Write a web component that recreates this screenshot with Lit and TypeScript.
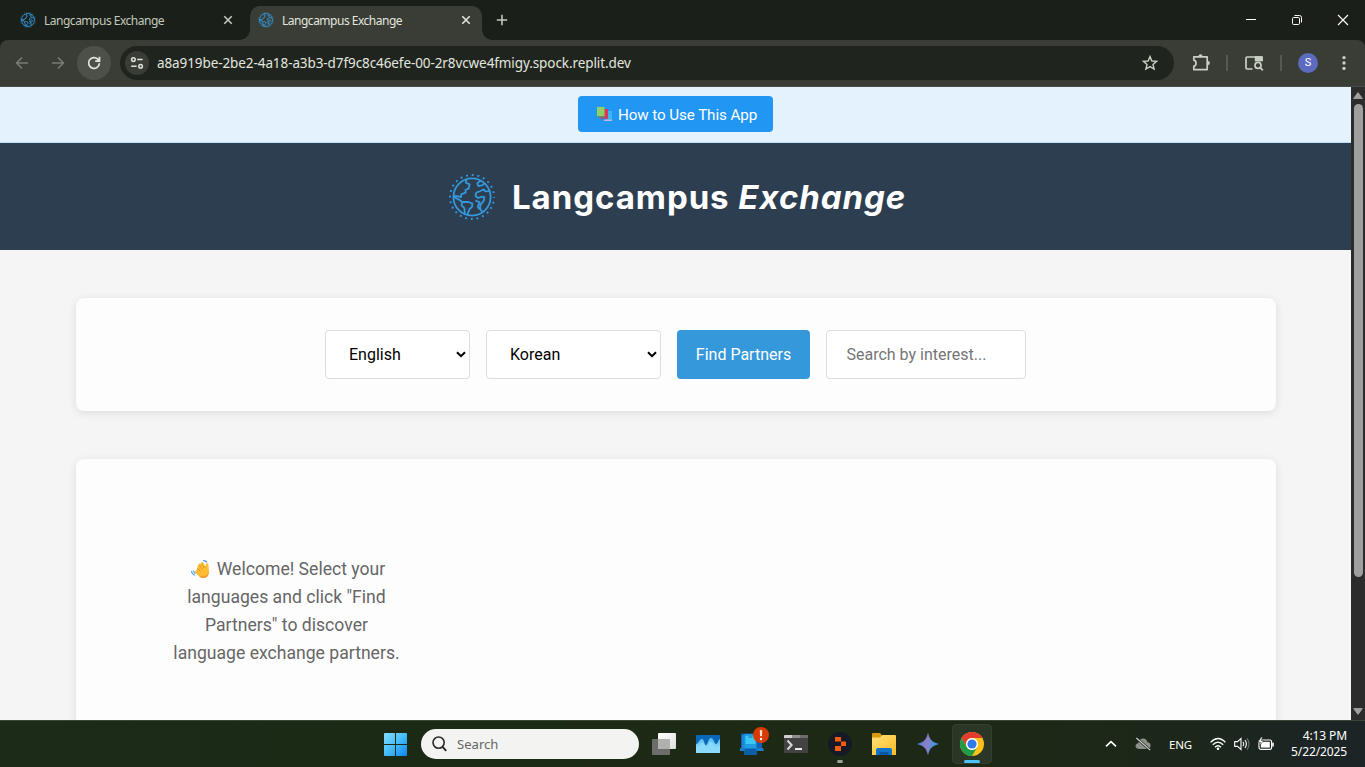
import { LitElement, html, css } from "lit";
import { customElement } from "lit/decorators.js";

const globe = (size: number, stroke: number) => html`
  <svg width=${size} height=${size} viewBox="0 0 46 46" fill="none" stroke="#3498db" stroke-width=${stroke} stroke-linejoin="round">
    <circle cx="23" cy="23" r="22" stroke-width="1.9" stroke-dasharray="1.9 3.86" stroke-dashoffset="0.95" />
    <circle cx="23" cy="23" r="18.6" />
    <path d="M17.6 5.4L16.8 8.6L20.6 10.4L19.8 14.4L16.4 16L16.8 18.6L12.4 20.2L12 23L5 21.6M5 23L11.6 26.6L13 28H19.6L23.4 29.6L23 32.8L20.6 35L18.2 40.8M13 28L12.6 31.4L15.4 34.2L15.8 40" />
    <path d="M31.4 6.8L28.2 9.4L29.4 12.2L33 11.4L35.2 9.6M40.6 17.2L36.4 17.4L35 15.4L31.4 17L27.4 18.6L26.4 21.8L29 24L32.8 22.6L35.4 23.2L34.6 27L31.6 30.6L31 34.6L33.6 38.2M26.4 26.6L30.6 28.2L28.8 32.6L30.4 35.4" />
  </svg>`;

const closeIcon = html`<svg width="10" height="10" viewBox="0 0 10 10" stroke="currentColor" stroke-width="1.6"><path d="M1.3 1.3L8.7 8.7M8.7 1.3L1.3 8.7" /></svg>`;
const caret = html`<svg width="10" height="7" viewBox="0 0 10 7" fill="none" stroke="#000" stroke-width="2"><path d="M1 1.2L5 5.1L9 1.2" /></svg>`;

@customElement("browser-chrome")
export class BrowserChrome extends LitElement {
  static styles = css`
    :host { display: block; font-family: "Noto Sans", sans-serif; color: #e3e6df; }
    svg { display: block; flex: none; }
    .strip { height: 40px; display: flex; background: #1b1f1a; }
    .tab { box-sizing: border-box; display: flex; align-items: center; font-size: 12px; letter-spacing: -0.49px; white-space: nowrap; }
    .tab .name { flex: 1; margin-left: 8px; }
    .idle { width: 250px; padding: 0 17px 0 20px; color: #c3c9bd; }
    .active { position: relative; width: 232px; margin-top: 6px; padding: 0 11px 6px 8px; border-radius: 10px 10px 0 0; background: #393d36; }
    .active::before, .active::after { content: ""; position: absolute; bottom: 0; width: 10px; height: 10px; }
    .active::before { left: -10px; background: radial-gradient(circle at 0 0, transparent 9.5px, #393d36 10px); }
    .active::after { right: -10px; background: radial-gradient(circle at 100% 0, transparent 9.5px, #393d36 10px); }
    .plus { margin: 14px 0 0 14px; }
    .window { margin-left: auto; display: flex; align-items: center; gap: 34px; padding-right: 16px; color: #fff; }
    .bar { box-sizing: border-box; height: 47px; display: flex; align-items: center; padding: 0 9px 1px 10px; background: #393d36; border-bottom: 1px solid #4a4d47; border-radius: 8px 8px 0 0; }
    .back { color: #777b73; }
    .fwd { margin-left: 12px; color: #777b73; }
    .reload { width: 34px; height: 34px; margin-left: 7px; border-radius: 50%; background: #4c5049; display: grid; place-items: center; }
    .omni { box-sizing: border-box; width: 1054px; height: 34px; margin-left: 9px; padding: 0 14px 0 5px; border-radius: 17px; background: #20241f; display: flex; align-items: center; }
    .tune { width: 24px; height: 24px; border-radius: 50%; background: #393d36; display: grid; place-items: center; }
    .url { flex: 1; margin-left: 8px; font-size: 13.5px; letter-spacing: -0.09px; white-space: nowrap; }
    .ext { margin-left: 15px; }
    .sep { width: 2px; height: 16px; background: #565b52; }
    .s1 { margin: 0 14px 0 13px; }
    .s2 { margin: 0 16px 0 14px; }
    .avatar { width: 20px; height: 20px; border-radius: 50%; background: #5c6bc0; color: #fff; font: 11px/20px Roboto, sans-serif; text-align: center; }
    .menu { margin-left: 14px; }
    .wrapbar { background: #1b1f1a; }
  `;
  render() {
    return html`
      <div class="strip">
        <div class="tab idle">${globe(16, 2.6)}<span class="name">Langcampus Exchange</span>${closeIcon}</div>
        <div class="tab active">${globe(16, 2.6)}<span class="name">Langcampus Exchange</span>${closeIcon}</div>
        <svg class="plus" width="12" height="12" viewBox="0 0 12 12" stroke="#c3c9bd" stroke-width="1.6"><path d="M6 .8V11.2M.8 6H11.2" /></svg>
        <div class="window">
          <svg width="12" height="12" viewBox="0 0 12 12"><path d="M1 5.5H11" stroke="#fff" /></svg>
          <svg width="12" height="12" viewBox="0 0 12 12" fill="none" stroke="#fff"><rect x="1.5" y="3.5" width="7" height="7" rx="1.2" /><path d="M3.5 1.5H8.5Q10.5 1.5 10.5 3.5V8.5" /></svg>
          <svg width="12" height="12" viewBox="0 0 12 12" stroke="#fff" stroke-width="1.1"><path d="M1 1L11 11M11 1L1 11" /></svg>
        </div>
      </div>
      <div class="wrapbar"><div class="bar">
        <svg class="back" width="24" height="24" viewBox="0 0 24 24" fill="none" stroke="currentColor" stroke-width="1.6"><path d="M18 12H7M12 6.5L6.6 12L12 17.5" /></svg>
        <svg class="fwd" width="24" height="24" viewBox="0 0 24 24" fill="none" stroke="currentColor" stroke-width="1.6"><path d="M6 12H17M12 6.5L17.4 12L12 17.5" /></svg>
        <div class="reload"><svg width="16" height="16" viewBox="0 0 16 16" fill="none" stroke="#e3e6df" stroke-width="1.7"><path d="M13.4 8.2A5.4 5.4 0 1 1 11.8 4.1L13.2 5.6M13.5 1.8V6.1H9.2" /></svg></div>
        <div class="omni">
          <div class="tune"><svg width="14" height="14" viewBox="0 0 14 14" fill="none" stroke="#dfe3da" stroke-width="1.5"><circle cx="3.4" cy="3.6" r="1.8" /><path d="M7.2 3.6H12.6M1.2 10.2H6.6" /><circle cx="10.6" cy="10.2" r="1.8" /></svg></div>
          <span class="url">a8a919be-2be2-4a18-a3b3-d7f9c8c46efe-00-2r8vcwe4fmigy.spock.replit.dev</span>
          <svg width="20" height="20" viewBox="0 0 20 20" fill="none" stroke="#c9cfc3" stroke-width="1.4"><path d="M10 3.6L11.9 8L16.6 8.4L13 11.5L14.1 16.1L10 13.6L5.9 16.1L7 11.5L3.4 8.4L8.1 8Z" /></svg>
        </div>
        <svg class="ext" width="24" height="24" viewBox="0 0 24 24"><path d="M4.8 5.8H18.2V18.6H4.8V15.3C7.8 14.5 7.8 9.9 4.8 9.1Z" fill="none" stroke="#c9cfc3" stroke-width="1.7" stroke-linejoin="round" /><path d="M9.4 5.4A2.1 2.1 0 0 1 13.6 5.4ZM18.8 10A2.1 2.1 0 0 1 18.8 14.2Z" fill="#c9cfc3" /></svg>
        <span class="sep s1"></span>
        <svg width="24" height="24" viewBox="0 0 24 24" fill="none" stroke="#c9cfc3" stroke-width="1.7"><path d="M10.5 18H5.2Q4 18 4 16.8V7.2Q4 6 5.2 6H19Q20 6 20 7V10" /><path d="M12.8 5.2H20.8V10.4H12.8Z" fill="#c9cfc3" stroke="none" /><circle cx="16" cy="14.4" r="3" /><path d="M18.2 16.6L20.8 19.4" /></svg>
        <span class="sep s2"></span>
        <span class="avatar">S</span>
        <svg class="menu" width="24" height="24" viewBox="0 0 24 24" fill="#c9cfc3"><circle cx="12" cy="6.6" r="1.7" /><circle cx="12" cy="12" r="1.7" /><circle cx="12" cy="17.4" r="1.7" /></svg>
      </div></div>`;
  }
}

@customElement("exchange-page")
export class ExchangePage extends LitElement {
  static styles = css`
    :host { display: flex; min-height: 0; overflow: hidden; font-family: Roboto, sans-serif; background: #f5f5f5; }
    svg { display: block; flex: none; }
    .page { flex: 1; min-width: 0; }
    .guide { box-sizing: border-box; height: 56px; padding-top: 9px; display: flex; justify-content: center; align-items: flex-start; background: #e3f2fd; border-bottom: 1px solid #bbdefb; }
    .how { box-sizing: border-box; width: 195px; height: 36px; padding: 1px 0 0 19px; display: flex; align-items: center; gap: 6px; border-radius: 4px; background: #2196f3; color: #fff; font-size: 15.2px; letter-spacing: -0.09px; white-space: nowrap; }
    .head { height: 107px; display: flex; align-items: center; padding-left: 449px; background: #2c3e50; }
    .title { margin: 0 0 0 17px; color: #fff; font: 700 33px/44px Inter, sans-serif; white-space: nowrap; letter-spacing: 0.95px; }
    .card { box-sizing: border-box; width: 1200px; margin: 48px 0 0 76px; border-radius: 8px; background: #fdfdfd; box-shadow: 0 2px 10px rgba(0, 0, 0, 0.1); }
    .filters { height: 113px; display: flex; align-items: center; justify-content: center; gap: 16px; padding-right: 1px; font-size: 16px; }
    .field { box-sizing: border-box; height: 49px; display: flex; align-items: center; justify-content: space-between; border: 1px solid #ddd; border-radius: 4px; background: #fff; color: #000; padding: 0 3px 0 23px; }
    .native { width: 145px; }
    .target { width: 175px; }
    .find { width: 133px; height: 49px; border-radius: 4px; background: #3498db; color: #fff; text-align: center; line-height: 49px; }
    .interest { width: 200px; padding-left: 19.5px; color: #757575; }
    .results { height: 400px; padding: 96px 0 0 96px; }
    .welcome { width: 229px; margin: 0; color: #666; font-size: 17.6px; line-height: 28px; text-align: center; white-space: nowrap; }
    .first { display: flex; justify-content: center; align-items: center; gap: 7px; padding-left: 3px; }
    .line { display: block; }
    .scroll { width: 14px; display: flex; flex-direction: column; align-items: center; background: #2c2c2c; padding-top: 5px; box-sizing: border-box; }
    .thumb { width: 9px; height: 473px; margin: 5px 0 131px; border-radius: 5px; background: #9f9f9f; }
  `;
  render() {
    return html`
      <div class="page">
        <div class="guide"><div class="how">
          <svg width="15" height="15" viewBox="0 0 15 15"><path d="M8 4H15V14H8Z" fill="#3cb8ee" /><path d="M7 12.6H15V14H7Z" fill="#c5b4e8" /><path d="M4 2H11V12H4Z" fill="#d9365f" /><path d="M3 10.6H10V12.2H3Z" fill="#8d5a9c" /><path d="M0 0H7.5V9.5H0Z" fill="#8fd163" /><path d="M0 9H7.5V10.4H0Z" fill="#5c8f66" /></svg>
          <span>How to Use This App</span>
        </div></div>
        <div class="head">${globe(46, 1.8)}<h1 class="title">Langcampus <em>Exchange</em></h1></div>
        <div class="card filters">
          <div class="field native"><span>English</span>${caret}</div>
          <div class="field target"><span>Korean</span>${caret}</div>
          <div class="find">Find Partners</div>
          <div class="field interest">Search by interest...</div>
        </div>
        <div class="card results">
          <p class="welcome">
            <span class="first">
              <svg width="19" height="19" viewBox="0 0 19 19"><path d="M5 11L7.5 4.2Q8.4 3 9.4 4L10.4 2.2Q11.5 1.4 12.2 2.6L14.2 6.4L15.6 3.6Q17 2.8 17.4 4.4L18 12Q17.6 17.6 12.5 18Q9.5 18.4 7.4 15.6L4 12.4Q3.8 11 5 11Z" fill="#fcbc33" /><path d="M7.4 15.6Q9.5 18.4 12.5 18Q17.6 17.6 18 12Q16 16 12.4 16Q9.6 16.4 7.4 15.6Z" fill="#f29a2e" /><path d="M6.5 8.5L9.5 11.5M8.6 5.6L11.4 9.4M11 4L13.4 8" stroke="#d98a1e" stroke-width=".8" /><path d="M.6 11Q.8 14.4 4 15.2M2.6 10.6Q2.6 12.6 4.4 13.4M12.2 .6Q15 .4 16 2.6" fill="none" stroke="#4a9ce0" stroke-width="1.1" /></svg>
              <span>Welcome! Select your</span>
            </span>
            <span class="line">languages and click "Find</span>
            <span class="line">Partners" to discover</span>
            <span class="line">language exchange partners.</span>
          </p>
        </div>
      </div>
      <div class="scroll">
        <svg width="10" height="7" viewBox="0 0 10 7"><path d="M5 .6L9.3 6.4H.7Z" fill="#9f9f9f" stroke="#9f9f9f" stroke-linejoin="round" /></svg>
        <div class="thumb"></div>
        <svg width="10" height="7" viewBox="0 0 10 7"><path d="M5 6.4L9.3 .6H.7Z" fill="#9f9f9f" stroke="#9f9f9f" stroke-linejoin="round" /></svg>
      </div>`;
  }
}

@customElement("task-bar")
export class TaskBar extends LitElement {
  static styles = css`
    :host { box-sizing: border-box; height: 47px; display: flex; border-top: 1px solid #3b4638; background: linear-gradient(90deg, #1c2a18 0%, #1b2a15 30%, #1d2916 72%, #1c271a 86%, #1c2427 100%); color: #fff; font-family: "Noto Sans", sans-serif; }
    svg { display: block; flex: none; }
    .start { margin: 12px 0 0 384px; }
    .search { box-sizing: border-box; width: 218px; height: 30px; margin: 8px 3px 0 13px; padding-left: 11px; display: flex; align-items: center; gap: 10px; border-radius: 15px; background: #f3f3f2; color: #666; font-size: 13.1px; }
    .app { margin-top: -1px; }
    .tray { flex: 1; display: flex; align-items: center; padding: 0 18px 0 111px; font-size: 11.5px; }
    .cloud { margin-left: 18px; }
    .lang { width: 24px; margin: 1px 17px 0 18px; letter-spacing: -0.2px; }
    .vol, .bat { margin-left: 8px; }
    .clock { margin-left: auto; text-align: right; line-height: 16px; white-space: nowrap; font-size: 12px; letter-spacing: -0.12px; }
  `;
  render() {
    return html`
      <svg class="start" width="24" height="24" viewBox="0 0 24 24"><defs><linearGradient id="w" x2="1" y2="1"><stop stop-color="#84dcff" /><stop offset=".5" stop-color="#45bdf9" /><stop offset="1" stop-color="#0a84f0" /></linearGradient></defs><path d="M0 1Q0 0 1 0H11V11H0ZM12 0H22Q23 0 23 1V11H12ZM0 12H11V23H1Q0 23 0 22ZM12 12H23V22Q23 23 22 23H12Z" fill="url(#w)" /></svg>
      <div class="search"><svg width="15" height="16" viewBox="0 0 15 16" fill="none" stroke="#2b2b2b" stroke-width="1.6"><circle cx="6.6" cy="6.6" r="5.6" /><path d="M10.6 10.8L14.2 14.8" stroke-width="2" /></svg>Search</div>
      <svg class="app" width="44" height="47" viewBox="0 0 44 47"><defs><linearGradient id="t" x2="1" y2="1"><stop stop-color="#fff" /><stop offset="1" stop-color="#dedede" /></linearGradient></defs><rect x="16" y="13" width="18" height="16" rx="1" fill="url(#t)" /><rect x="10" y="19" width="18" height="16" rx="1" fill="#6c6c6c" /><path d="M16 19H28V29H16Z" fill="#b0b0ae" /></svg>
      <svg class="app" width="44" height="47" viewBox="0 0 44 47"><defs><linearGradient id="m" x2="0" y2="1"><stop stop-color="#54baf1" /><stop offset="1" stop-color="#a5e7ff" /></linearGradient></defs><rect x="10" y="15" width="24" height="18" rx="1" fill="#0b67b8" /><path d="M10 24C13 24 13 19 16 19C18.5 19 18 25 20 25C22 25 22 18 25 18C28 18 28 24 30 24C32 24 32 20 34 19V32Q34 33 33 33H11Q10 33 10 32Z" fill="url(#m)" /><path d="M10 27C14 27 14 23 16.5 23C19 23 18.6 29 20.5 29C22.5 29 22.5 22 25 22C28 22 27 28 30 28Q32.6 28 34 25V33H10Z" fill="#8bdafc" /></svg>
      <svg class="app" width="44" height="47" viewBox="0 0 44 47"><path d="M11 14.5Q11 13.5 12 13.5H31Q32 13.5 32 14.5V28H11Z" fill="#0f62b4" /><path d="M12 15H15V28H12Z" fill="#1d86d8" /><path d="M10 28H33L34 31H10Z" fill="#1a7ccb" /><rect x="14.5" y="14" width="12" height="21" rx="1" fill="#1e9de3" /><path d="M15.5 16H25.5V24H15.5Z" fill="#3cc8f5" /><path d="M18.5 17H22.5" stroke="#0c6cb5" /><path d="M14.5 28.5H26.5V33.5Q26.5 35 25 35H16Q14.5 35 14.5 33.5Z" fill="#0b5ea8" /><circle cx="31" cy="15" r="8" fill="#d83b01" /><path d="M30.2 10.4H31.8L31.5 16H30.5Z" fill="#fff" stroke="#fff" stroke-width=".6" /><circle cx="31" cy="19" r="1.2" fill="#fff" /></svg>
      <svg class="app" width="44" height="47" viewBox="0 0 44 47"><rect x="10" y="15" width="24" height="18" rx="1.2" fill="#424242" /><path d="M10 18V16Q10 15 11 15H18V18Z" fill="#cfcfcf" /><path d="M18 15H26V18H18Z" fill="#8e8e8e" /><path d="M26 15H33Q34 15 34 16V18H26Z" fill="#6d6d6d" /><path d="M13.5 20.5L17.6 25L13.5 29.5" fill="none" stroke="#d9d9d9" stroke-width="2" /><path d="M21 29H28" stroke="#fff" stroke-width="1.8" /></svg>
      <svg class="app" width="44" height="47" viewBox="0 0 44 47"><circle cx="22" cy="24" r="12" fill="#151a24" /><path d="M17 17H23V21.6H17ZM23 21.6H28V26H23ZM17 26H23V31H17Z" fill="#f65a0c" /><rect x="19" y="40" width="6" height="3" rx="1.5" fill="#9ba298" /></svg>
      <svg class="app" width="44" height="47" viewBox="0 0 44 47"><defs><linearGradient id="f" x2="1" y2="1"><stop stop-color="#ffe07a" /><stop offset="1" stop-color="#fdbb23" /></linearGradient></defs><path d="M10 20V14Q10 13 11 13H18L20.6 16V20Z" fill="#d99a0b" /><path d="M10 17.5H18L20.5 15H33Q34 15 34 16V35H10Z" fill="url(#f)" /><path d="M14 35V30Q14 28 16 28H28Q30 28 30 30V35Z" fill="#1173c9" /><path d="M17.5 32H26.5V35H17.5Z" fill="#0a559f" /></svg>
      <svg class="app" width="44" height="47" viewBox="0 0 44 47"><defs><linearGradient id="g" x1="0" y1="0.4" x2="1" y2="0.6"><stop stop-color="#4a80dd" /><stop offset=".45" stop-color="#8c80c6" /><stop offset=".75" stop-color="#4f93df" /><stop offset="1" stop-color="#3f8de8" /></linearGradient></defs><path d="M22 12.6C23.4 19.6 26.2 22.5 33.2 24C26.2 25.5 23.4 28.4 22 35.4C20.6 28.4 17.8 25.5 10.8 24C17.8 22.5 20.6 19.6 22 12.6Z" fill="url(#g)" /></svg>
      <svg class="app" width="44" height="47" viewBox="0 0 44 47"><rect x="2.5" y="4.5" width="39" height="39" rx="4" fill="#2a3626" stroke="#354031" /><circle cx="22" cy="24" r="12" fill="#fbc116" /><path d="M11.6 18A12 12 0 0 1 32.4 18H22A6 6 0 0 0 16.8 27Z" fill="#e33b2e" /><path d="M11.6 18A12 12 0 0 0 22 36L27.2 27A6 6 0 0 1 16.8 27Z" fill="#229b48" /><circle cx="22" cy="24" r="6" fill="#fff" /><circle cx="22" cy="24" r="4.6" fill="#3079ed" /><rect x="14" y="40" width="16" height="3" rx="1.5" fill="#4cc2ff" /></svg>
      <div class="tray">
        <svg width="12" height="12" viewBox="0 0 12 12" fill="none" stroke="#fff" stroke-width="1.6"><path d="M1 8.4L6 3.6L11 8.4" /></svg>
        <svg class="cloud" width="16" height="14" viewBox="0 0 16 14"><path d="M3.8 12Q.4 11.6 .5 8.8Q.8 6.4 3.4 6Q4.4 1.6 8.2 1.6Q11.6 1.8 12.4 5.2Q15.6 5.6 15.6 8.8Q15.4 11.8 12.4 12Z" fill="#8b8f89" /><path d="M1.2 .8L15.4 13.4" stroke="#1c2719" stroke-width="2.4" /><path d="M1.4 1L15.2 13.2" stroke="#d8dad7" stroke-width="1.1" /></svg>
        <span class="lang">ENG</span>
        <svg width="16" height="14" viewBox="0 0 16 14" fill="none" stroke="#fff" stroke-width="1.3"><path d="M.6 5.4Q8-2.4 15.4 5.4M2.8 7.8Q8 2.4 13.2 7.8M5 10.2Q8 7.2 11 10.2" /><circle cx="8" cy="11.8" r="1.3" fill="#fff" stroke="none" /></svg>
        <svg class="vol" width="16" height="14" viewBox="0 0 16 14" fill="none" stroke="#fff" stroke-width="1.1"><path d="M.7 4.6H3.6L7 1.4V12.6L3.6 9.4H.7Z" /><path d="M9 4.8Q10.6 7 9 9.2M11 3Q13.8 7 11 11" /><path d="M13 1.4Q17 7 13 12.6" stroke="#6c716c" /></svg>
        <svg class="bat" width="16" height="14" viewBox="0 0 16 14"><rect x="1" y="3" width="12.6" height="9.4" rx="1.8" fill="none" stroke="#fff" stroke-width="1.2" /><rect x="2.8" y="4.8" width="9" height="5.8" fill="#fff" /><path d="M14.2 5.8H15.8V9.6H14.2Z" fill="#fff" /><path d="M3.2 0L0 5.2H2.4L1.6 8.8L5.6 3.6H3.2L4.6 0Z" fill="#fff" stroke="#1c2622" stroke-width=".5" /></svg>
        <div class="clock">4:13 PM<br />5/22/2025</div>
      </div>`;
  }
}

@customElement("app-root")
export class AppRoot extends LitElement {
  static styles = css`
    :host { display: grid; grid-template-rows: 87px 633px 47px; width: 1365px; height: 767px; overflow: hidden; }
  `;
  render() {
    return html`<browser-chrome></browser-chrome><exchange-page></exchange-page><task-bar></task-bar>`;
  }
}
